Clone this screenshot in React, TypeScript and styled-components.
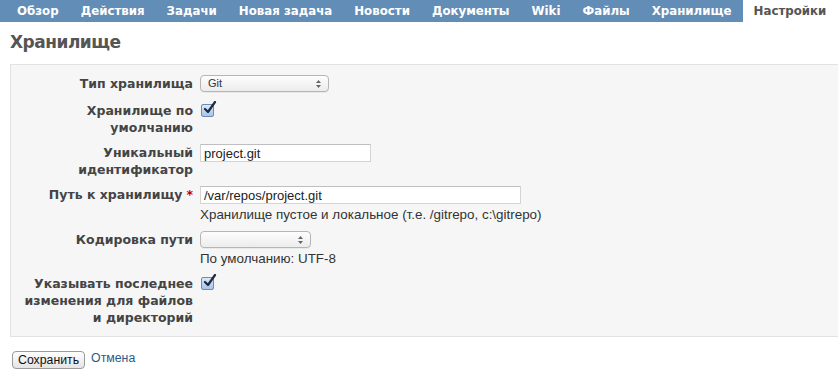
import React from 'react';
import styled, { createGlobalStyle } from 'styled-components';

const GlobalStyle = createGlobalStyle`
  html, body {
    margin: 0;
    padding: 0;
    background: #fff;
    font-family: "DejaVu Sans", Verdana, sans-serif;
    color: #333;
  }
`;

const Page = styled.div`
  width: 838px;
  height: 377px;
  overflow: hidden;
`;

const Tabs = styled.ul`
  display: flex;
  margin: 0;
  padding: 0 0 0 6px;
  list-style: none;
  height: 22px;
  background: #628db6;
`;

const Tab = styled.li<{ $active?: boolean }>`
  display: flex;
  align-items: center;
  padding: 0 11px;
  font-size: 11.8px;
  font-weight: bold;
  white-space: nowrap;
  color: ${(p) => (p.$active ? '#555' : '#fff')};
  background: ${(p) => (p.$active ? '#fff' : 'transparent')};
  ${(p) => (p.$active ? 'flex: 1;' : '')}
`;

const Content = styled.div`
  padding: 0 0 0 10px;
`;

const Title = styled.h2`
  margin: 0;
  padding: 9px 0 11px;
  font-size: 17px;
  letter-spacing: -0.5px;
  line-height: 22px;
  font-weight: bold;
  color: #555;
`;

const Box = styled.div`
  background: #f6f6f6;
  border: 1px solid #e2e2e2;
  border-right: none;
  padding: 10px 0 10px;
  display: grid;
  grid-template-columns: 182px 1fr;
  column-gap: 7px;
  row-gap: 8px;
  align-items: start;
`;

const Label = styled.div<{ $after?: number }>`
  text-align: right;
  font-size: 12.5px;
  font-weight: bold;
  line-height: 17px;
  color: #444;
  margin-bottom: ${(p) => p.$after ?? 0}px;
`;

const Required = styled.span`
  color: #bb0000;
  margin-left: 4px;
`;

const Field = styled.div`
  display: flex;
  flex-direction: column;
  align-items: flex-start;
`;

const TextInput = styled.input<{ $w: number }>`
  box-sizing: border-box;
  width: ${(p) => p.$w}px;
  height: 18px;
  margin: 0;
  padding: 0 3px;
  border: 1px solid #d4d4d4;
  border-top-color: #bfbfbf;
  background: #fff;
  font-family: "Liberation Sans", Arial, sans-serif;
  font-size: 13px;
  color: #222;
  outline: none;
`;

const SelectWrap = styled.div<{ $w: number }>`
  position: relative;
  box-sizing: border-box;
  width: ${(p) => p.$w}px;
  height: 17px;
  border: 1px solid #b5b5b5;
  border-radius: 4px;
  background: linear-gradient(#fdfdfd, #ececec);
  box-shadow: 0 1px 0 rgba(0, 0, 0, 0.05);
  font-family: "Liberation Sans", Arial, sans-serif;
  font-size: 11px;
  line-height: 15px;
  padding-left: 7px;
  color: #333;
`;

const Arrows = styled.svg`
  position: absolute;
  right: 7px;
  top: 4px;
`;

const Check = styled.span`
  display: inline-flex;
  box-sizing: border-box;
  width: 13px;
  height: 13px;
  margin: 2px 0 0 1px;
  border: 1px solid #6d8bb5;
  border-radius: 2px;
  background: linear-gradient(#dbe8f8, #a9c4e8);
  position: relative;
`;

const Help = styled.div`
  font-family: "Liberation Sans", Arial, sans-serif;
  font-size: 13.4px;
  line-height: 16px;
  padding-top: 3px;
  color: #333;
`;

const Actions = styled.div`
  display: flex;
  align-items: center;
  gap: 6px;
  padding: 14px 0 0 2px;
`;

const Button = styled.button`
  height: 18px;
  padding: 0 5px;
  border: 1px solid #9a9a9a;
  border-radius: 4px;
  background: linear-gradient(#ffffff, #e4e4e4);
  font-family: "Liberation Sans", Arial, sans-serif;
  font-size: 12.3px;
  color: #111;
`;

const Link = styled.a`
  font-family: "Liberation Sans", Arial, sans-serif;
  font-size: 12.3px;
  color: #2a5a8a;
  text-decoration: none;
  margin-top: -4px;
`;

const tabs = ['Обзор', 'Действия', 'Задачи', 'Новая задача', 'Новости', 'Документы', 'Wiki', 'Файлы', 'Хранилище'];

const SelectArrows = () => (
  <Arrows width="5" height="8" viewBox="0 0 5 8">
    <path d="M2.5 0 L5 3 H0 Z" fill="#666" />
    <path d="M2.5 8 L5 5 H0 Z" fill="#666" />
  </Arrows>
);

const Checkbox = () => (
  <Check>
    <svg width="14" height="14" viewBox="0 0 14 14" style={{ position: 'absolute', left: 1, top: -4 }}>
      <path d="M2 8 L5 11 L12 1" stroke="#1d2a44" strokeWidth="2.2" fill="none" strokeLinecap="round" strokeLinejoin="round" />
    </svg>
  </Check>
);

const App: React.FC = () => {
  return (
    <Page>
      <GlobalStyle />
      <Tabs>
        {tabs.map((t) => (
          <Tab key={t}>{t}</Tab>
        ))}
        <Tab $active>Настройки</Tab>
      </Tabs>
      <Content>
        <Title>Хранилище</Title>
        <Box>
          <Label $after={2}>Тип хранилища</Label>
          <Field>
            <SelectWrap $w={129}>
              Git
              <SelectArrows />
            </SelectWrap>
          </Field>

          <Label>
            Хранилище по
            <br />
            умолчанию
          </Label>
          <Field>
            <Checkbox />
          </Field>

          <Label>
            Уникальный
            <br />
            идентификатор
          </Label>
          <Field>
            <TextInput $w={171} defaultValue="project.git" />
          </Field>

          <Label>
            Путь к хранилищу<Required>*</Required>
          </Label>
          <Field>
            <TextInput $w={321} defaultValue="/var/repos/project.git" />
            <Help>Хранилище пустое и локальное (т.е. /gitrepo, c:\gitrepo)</Help>
          </Field>

          <Label>Кодировка пути</Label>
          <Field>
            <SelectWrap $w={111}>
              <SelectArrows />
            </SelectWrap>
            <Help>По умолчанию: UTF-8</Help>
          </Field>

          <Label>
            Указывать последнее
            <br />
            изменения для файлов
            <br />и директорий
          </Label>
          <Field>
            <Checkbox />
          </Field>
        </Box>
        <Actions>
          <Button>Сохранить</Button>
          <Link href="#">Отмена</Link>
        </Actions>
      </Content>
    </Page>
  );
};

export default App;
